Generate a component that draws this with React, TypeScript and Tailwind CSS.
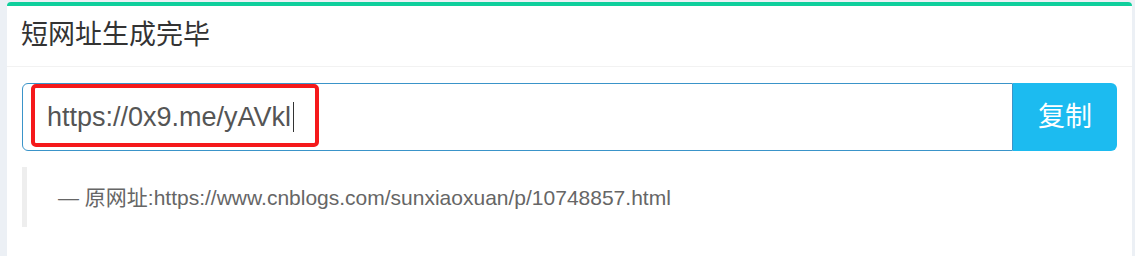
export default function App() {
  const shortUrl = "https://0x9.me/yAVkl";
  const originalUrl = "https://www.cnblogs.com/sunxiaoxuan/p/10748857.html";

  return (
    <main
      className="min-h-screen bg-[#ecf0f5] pl-[7px] pr-[3px] pt-[2px]"
      style={{ fontFamily: '"Liberation Sans", Arial, "Noto Sans CJK SC", sans-serif' }}
    >
      <div className="bg-white rounded-t-[4px] border-t-4 border-[#0fcf9c] min-h-[254px]">
        <div className="h-[61px] px-[14px] flex items-center border-b border-[#f2f2f2]">
          <h3 className="text-[27px] leading-none text-[#333] pb-[2px]">短网址生成完毕</h3>
        </div>

        <div className="px-[15px] pt-[16px]">
          <div className="relative flex h-[68px]">
            <div className="flex-1 flex items-center border border-[#3a94c9] rounded-l-[6px] pl-[24px]">
              <span className="text-[27px] text-[#555] leading-none">{shortUrl}</span>
              <span className="ml-[2px] w-px h-[30px] bg-[#333]" />
            </div>
            <button className="w-[104px] bg-[#1cbbf0] text-white text-[27px] rounded-r-[6px] flex items-center justify-center">
              复制
            </button>
            {/* annotation box */}
            <div className="absolute left-[9px] top-[1px] w-[288px] h-[63px] border-4 border-[#f5191b] rounded-[5px] pointer-events-none" />
          </div>

          <blockquote className="mt-[16px] h-[60px] border-l-[5px] border-[#eeeeee] flex items-center pl-[31px]">
            <span className="text-[21px] text-[#666] leading-none">
              — 原网址:{originalUrl}
            </span>
          </blockquote>
        </div>
      </div>
    </main>
  );
}
